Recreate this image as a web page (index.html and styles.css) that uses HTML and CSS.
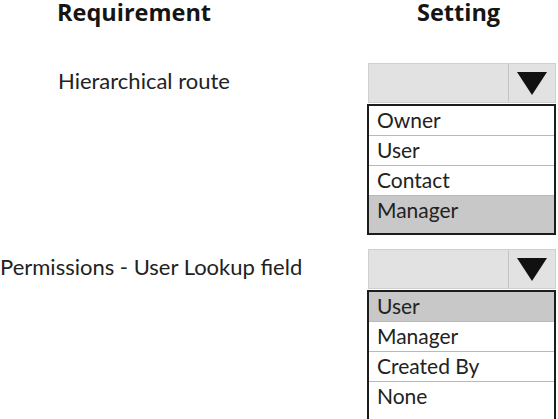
FILE: index.html
```html
<!DOCTYPE html>
<html>
	<head>
		<title>Requirement / Setting</title>
		<link rel="stylesheet" href="styles.css">
	</head>
	<body>
		<div class="page">
			<div class="head">
				<div class="headLeft">Requirement</div>
				<div class="headRight">Setting</div>
			</div>

			<div class="row rowFirst">
				<div class="label">Hierarchical route</div>
				<div class="setting">
					<div class="combo">
						<div class="comboValue"></div>
						<div class="comboArrow"><span class="tri"></span></div>
					</div>
					<div class="list">
						<div class="item">Owner</div>
						<div class="item">User</div>
						<div class="item">Contact</div>
						<div class="item picked last">Manager</div>
					</div>
				</div>
			</div>

			<div class="row rowSecond">
				<div class="label flush">Permissions - User Lookup field</div>
				<div class="setting">
					<div class="combo">
						<div class="comboValue"></div>
						<div class="comboArrow"><span class="tri"></span></div>
					</div>
					<div class="list">
						<div class="item picked">User</div>
						<div class="item">Manager</div>
						<div class="item">Created By</div>
						<div class="item last">None</div>
					</div>
				</div>
			</div>
		</div>
	</body>
</html>
```

FILE: styles.css
```css
html, body
	{
		margin: 0;
		padding: 0;
		background-color: #ffffff;
		overflow: hidden;
	}
body
	{
		font-family: Lato, "Liberation Sans", sans-serif;
		color: #222222;
	}
.page
	{
		width: 558px;
		height: 419px;
	}
.head
	{
		display: grid;
		grid-template-columns: 368px 190px;
		height: 26px;
		font-family: "Open Sans", Lato, sans-serif;
		font-weight: bold;
		font-size: 23.5px;
		line-height: 24px;
		color: #151515;
	}
.headLeft
	{
		padding-left: 57px;
	}
.headRight
	{
		padding-left: 49px;
	}
.row
	{
		display: grid;
		grid-template-columns: 368px 188px;
	}
.rowFirst
	{
		margin-top: 37px;
	}
.rowSecond
	{
		margin-top: 14px;
	}
.label
	{
		font-size: 22px;
		height: 40px;
		line-height: 36px;
		padding-left: 58px;
		white-space: nowrap;
	}
.label.flush
	{
		padding-left: 0;
	}
.combo
	{
		display: flex;
		height: 38px;
		border: 1px solid #cfcfcf;
		background-color: #e2e2e2;
	}
.comboValue
	{
		flex: 1;
	}
.comboArrow
	{
		width: 46px;
		border-left: 1px solid #c4c4c4;
		display: flex;
		align-items: center;
		justify-content: center;
	}
.tri
	{
		width: 0;
		height: 0;
		border-left: 15px solid transparent;
		border-right: 15px solid transparent;
		border-top: 23px solid #111111;
	}
.list
	{
		margin-top: 1px;
		margin-left: -1px;
		border: 2px solid #1c1c1c;
		background-color: #ffffff;
	}
.item
	{
		height: 29px;
		line-height: 27px;
		font-size: 21px;
		padding-left: 8px;
		border-bottom: 1px solid #b9b9b9;
	}
.item.last
	{
		height: 37px;
		border-bottom: none;
	}
.item.picked
	{
		background-color: #c8c8c8;
	}
```
